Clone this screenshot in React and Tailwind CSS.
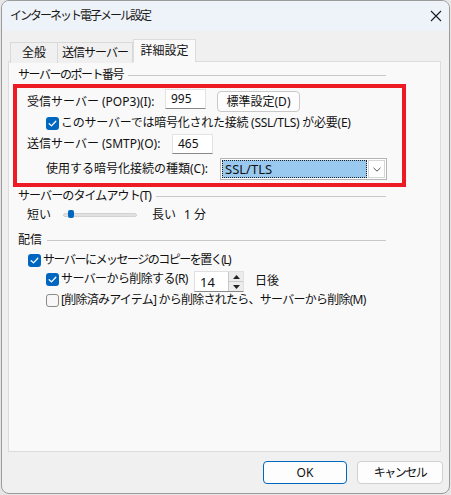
import React from "react";

const FONT =
  "font-['Noto_Sans','Noto_Sans_CJK_JP',sans-serif] text-[12px] leading-[16px] text-[#111]";

export default function App() {
  return (
    <div className={`w-[451px] h-[495px] bg-[#e6e6e6] pl-[1px] ${FONT}`}>
      <div className="w-[449px] h-[494px] rounded-[8px] border border-[#9b9b9b] bg-[#f0f0f0] overflow-hidden">
        {/* TITLE BAR */}
        <div className="h-[30px] bg-[#eef3f9] flex items-center justify-between pl-[8px] pr-[7px]">
          <span className="text-[#1a1a1a] text-[12px] tracking-[-2px]">インターネット電子メール設定</span>
          <CloseIcon />
        </div>

        {/* BODY */}
        <div className="pt-[8px] pl-[6px]">
          {/* TABS */}
          <div className="flex items-end h-[23px] pl-[2px] relative z-10">
            <Tab width="w-[48px]">全般</Tab>
            <Tab width="w-[75px]" noLeft>
              <span className="tracking-[-1px]">送信サーバー</span>
            </Tab>
            <Tab width="w-[63px]" active>詳細設定</Tab>
          </div>

          {/* PANEL */}
          <div className="-mt-[1px] w-[433px] h-[391px] border border-[#dcdcdc] bg-[#f9f9f9]">
            <div className="pt-[4px]">
              <GroupHeader label="サーバーのポート番号" tracking="tracking-[-1.5px]" />
            </div>

            {/* RED BOX */}
            <div className="ml-[4px] w-[393px] h-[103px] border-4 border-[#ed1c24]">
              <div className="flex items-start h-[25px]">
                <span className="ml-[10px] mt-[6px] w-[138px]">受信サーバー (POP3)(I):</span>
                <TextBox value="995" width="w-[41px]" extra="mt-[1px]" />
                <button className="ml-[11px] mt-[3px] w-[83px] h-[21px] rounded-[4px] border border-[#c9c9c9] bg-[#fdfdfd] text-[12px] leading-[16px]">
                  標準設定(D)
                </button>
              </div>
              <div className="flex items-center h-[20px] pl-[29px]">
                <Checkbox checked />
                <span className="ml-[2px] tracking-[-0.25px]">このサーバーでは暗号化された接続 (SSL/TLS) が必要(E)</span>
              </div>
              <div className="flex items-center h-[22px]">
                <span className="ml-[10px] w-[145px]">送信サーバー (SMTP)(O):</span>
                <TextBox value="465" width="w-[41px]" />
              </div>
              <div className="flex items-center h-[22px] mt-[3px]">
                <span className="ml-[29px] w-[174px]">使用する暗号化接続の種類(C):</span>
                <Select value="SSL/TLS" />
              </div>
            </div>

            <GroupHeader label="サーバーのタイムアウト(T)" tracking="tracking-[-0.9px]" />

            {/* SLIDER */}
            <div className="flex items-center h-[20px]">
              <span className="ml-[18px] w-[24px]">短い</span>
              <div className="ml-[12px] w-[74px] h-[4px] rounded-full bg-[#e1e1e1] border border-[#d2d2d2] relative">
                <div className="absolute left-[4px] -top-[4px] w-[6px] h-[8px] rounded-[2px] bg-[#0067c0]" />
              </div>
              <span className="ml-[15px]">長い</span>
              <span className="ml-[8px]">1 分</span>
            </div>

            <div className="mt-[6px]">
              <GroupHeader label="配信" />
            </div>

            <div className="flex items-center h-[20px] mt-[1px] pl-[19px]">
              <Checkbox checked />
              <span className="ml-[2px] tracking-[-1.5px]">サーバーにメッセージのコピーを置く(L)</span>
            </div>
            <div className="flex items-start h-[22px]">
              <div className="flex items-center h-[18px] ml-[37px] w-[148px]">
                <Checkbox checked />
                <span className="ml-[2px] tracking-[-0.6px]">サーバーから削除する(R)</span>
              </div>
              <SpinBox value="14" />
              <span className="ml-[11px] mt-[3px]">日後</span>
            </div>
            <div className="flex items-center h-[16px] pl-[37px]">
              <Checkbox />
              <span className="ml-[2px] tracking-[-0.75px]">[削除済みアイテム] から削除されたら、サーバーから削除(M)</span>
            </div>
          </div>

          {/* BUTTONS */}
          <div className="flex mt-[9px] pl-[255px] gap-[10px]">
            <button className="w-[84px] h-[23px] rounded-[4px] border border-[#0067c0] bg-[#fdfdfd] text-[12px]">OK</button>
            <button className="w-[86px] h-[23px] rounded-[4px] border border-[#d0d0d0] bg-[#fdfdfd] text-[12px] tracking-[-1.5px]">
              キャンセル
            </button>
          </div>
        </div>
      </div>
    </div>
  );
}

/* ---------- UI ---------- */

function Tab({ active, noLeft, width, children }) {
  if (active) {
    return (
      <div className={`${width} h-[23px] border border-b-0 border-[#dcdcdc] bg-[#f9f9f9] flex items-center justify-center pb-[1px]`}>
        {children}
      </div>
    );
  }
  return (
    <div
      className={`${width} h-[21px] border border-b-0 ${noLeft ? "border-l-0" : ""} border-[#d9d9d9] bg-[#f0f0f0] flex items-center justify-center -mb-[1px]`}
    >
      {children}
    </div>
  );
}

function GroupHeader({ label, tracking = "" }) {
  return (
    <div className="flex items-center h-[18px] pl-[9px] w-[377px]">
      <span className={tracking}>{label}</span>
      <div className="flex-1 ml-[5px] h-px bg-[#c8c8c8]" />
    </div>
  );
}

function TextBox({ value, width, extra = "" }) {
  return (
    <div className={`${width} h-[20px] ${extra} bg-white border border-[#e3e3e3] border-b-[#8a8a8a] flex items-center pl-[5px]`}>
      {value}
    </div>
  );
}

function Checkbox({ checked }) {
  if (checked) {
    return (
      <div className="w-[13px] h-[13px] rounded-[3px] bg-[#0067c0] flex items-center justify-center shrink-0">
        <svg width="9" height="9" viewBox="0 0 9 9" fill="none">
          <path d="M1.2 4.7 L3.5 6.9 L7.8 2.2" stroke="white" strokeWidth="1.3" strokeLinecap="round" strokeLinejoin="round" />
        </svg>
      </div>
    );
  }
  return <div className="w-[13px] h-[13px] rounded-[3px] border border-[#8a8a8a] bg-[#f7f7f7] shrink-0" />;
}

function Select({ value }) {
  return (
    <div className="w-[167px] h-[22px] border border-[#b4b4b4] bg-white flex items-center p-[1px]">
      <div className="flex-1 h-full bg-[#99c9ef] border border-dotted border-[#202020] flex items-center pl-[2px] text-[13px]">
        {value}
      </div>
      <div className="w-[17px] h-full ml-[1px] border border-[#d5d5d5] bg-white flex items-center justify-center">
        <svg width="8" height="5" viewBox="0 0 8 5" fill="none">
          <path d="M0.5 0.8 L4 4.2 L7.5 0.8" stroke="#555" strokeWidth="1" />
        </svg>
      </div>
    </div>
  );
}

function SpinBox({ value }) {
  return (
    <div className="mt-[1px] w-[50px] h-[21px] bg-white border border-[#e0e0e0] border-b-[#8a8a8a] flex">
      <div className="flex-1 flex items-center pl-[5px] text-[13px]">{value}</div>
      <div className="w-[15px] border-l border-[#c8c8c8] bg-[#ececec] flex flex-col">
        <div className="flex-1 flex items-center justify-center border-b border-[#c8c8c8]">
          <svg width="7" height="4" viewBox="0 0 7 4"><path d="M0 4 L3.5 0 L7 4 Z" fill="#222" /></svg>
        </div>
        <div className="flex-1 flex items-center justify-center">
          <svg width="7" height="4" viewBox="0 0 7 4"><path d="M0 0 L3.5 4 L7 0 Z" fill="#222" /></svg>
        </div>
      </div>
    </div>
  );
}

function CloseIcon() {
  return (
    <svg width="12" height="12" viewBox="0 0 12 12" fill="none">
      <path d="M1 1 L11 11 M11 1 L1 11" stroke="#1a1a1a" strokeWidth="1.1" />
    </svg>
  );
}
